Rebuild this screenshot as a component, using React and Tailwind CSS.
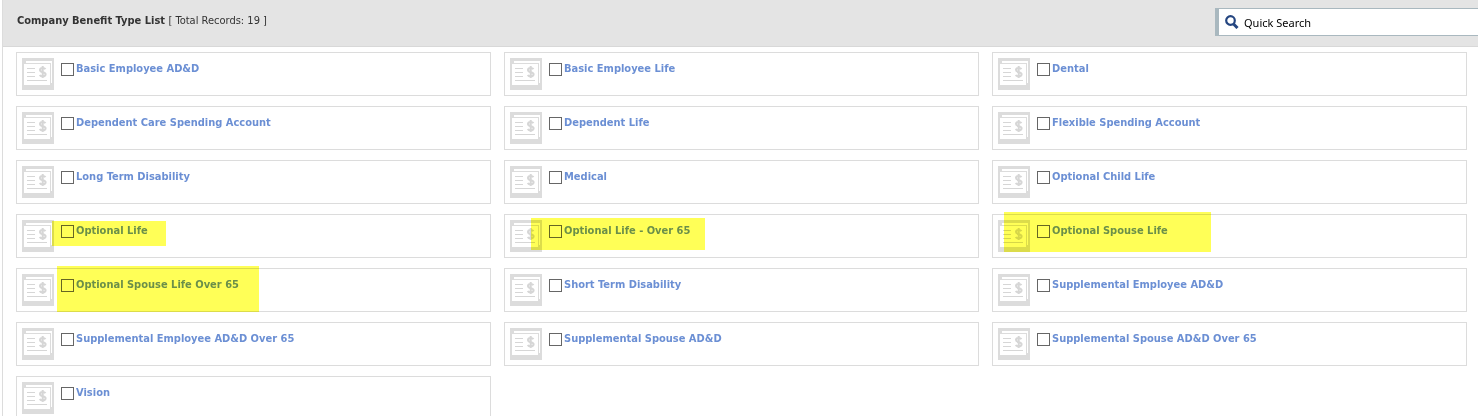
import React from 'react';

const benefits = [
  { name: 'Basic Employee AD&D' },
  { name: 'Basic Employee Life' },
  { name: 'Dental' },
  { name: 'Dependent Care Spending Account' },
  { name: 'Dependent Life' },
  { name: 'Flexible Spending Account' },
  { name: 'Long Term Disability' },
  { name: 'Medical' },
  { name: 'Optional Child Life' },
  { name: 'Optional Life', marker: 'left-[35px] top-[6px] w-[114px] h-[25px]' },
  { name: 'Optional Life - Over 65', marker: 'left-[26px] top-[3px] w-[174px] h-[32px]' },
  { name: 'Optional Spouse Life', marker: 'left-[11px] top-[-3px] w-[207px] h-[40px]' },
  { name: 'Optional Spouse Life Over 65', marker: 'left-[40px] top-[-3px] w-[202px] h-[46px]' },
  { name: 'Short Term Disability' },
  { name: 'Supplemental Employee AD&D' },
  { name: 'Supplemental Employee AD&D Over 65' },
  { name: 'Supplemental Spouse AD&D' },
  { name: 'Supplemental Spouse AD&D Over 65' },
  { name: 'Vision' },
];

function BenefitIcon() {
  return (
    <svg className="size-8 shrink-0" viewBox="0 0 32 32" aria-hidden="true">
      <rect width="32" height="32" fill="#dcdcdc" />
      <path d="M4 3h26v22h-1V4H4z" fill="#fff" />
      <path d="M4 3h26v2H4z" fill="#fff" />
      <path d="M2 6h26v21H2z" fill="#fff" />
      <path d="M5 10.5h8M5 14.5h8M5 18.5h8M5 22.5h20" stroke="#d6d6d6" />
      <path
        d="M23.500 11.200c-.6-.8-1.600-1.200-2.800-1.200-1.500 0-2.700.8-2.700 2.100 0 3 5.600 1.400 5.600 4.200 0 1.300-1.200 2.100-2.900 2.100-1.300 0-2.400-.5-3-1.400M20.700 8v12"
        fill="none"
        stroke="#d6d6d6"
        strokeWidth="2"
      />
    </svg>
  );
}

function SearchIcon() {
  return (
    <svg className="size-[14px] shrink-0" viewBox="0 0 14 14" fill="none" stroke="#244580" aria-hidden="true">
      <circle cx="5.500" cy="5.500" r="4.300" strokeWidth="2.200" />
      <path d="M8.500 9l4 4" strokeWidth="3" />
    </svg>
  );
}

function BenefitCard({ name, marker }) {
  return (
    <div className="relative flex items-start border border-[#dcdcdc] bg-white p-[5px]">
      <BenefitIcon />
      <label className="ml-[7px] flex items-start gap-[2px]">
        <input
          type="checkbox"
          className="mt-[5px] size-[13px] shrink-0 appearance-none border border-[#666] bg-white checked:bg-[#666]"
        />
        <span className="mt-1 text-[11px] leading-[14px] font-bold text-[#6b8fd4]">{name}</span>
      </label>
      {marker && (
        <div className={`pointer-events-none absolute bg-[#ffff57] mix-blend-multiply ${marker}`} />
      )}
    </div>
  );
}

export default function App() {
  return (
    <div className="h-screen overflow-hidden bg-white pl-[2px] font-['DejaVu_Sans_Condensed','DejaVu_Sans',sans-serif]">
      <div className="min-h-full border-l border-[#dcdcdc]">
        <header className="flex items-start justify-between border-b border-[#d8d8d8] bg-[#e4e4e4] pt-2 pb-[10px] pl-[14px]">
          <h1 className="mt-[6px] text-[11px] leading-[14px] font-bold text-[#333]">
            Company Benefit Type List <span className="font-normal">[ Total Records: 19 ]</span>
          </h1>
          <label className="flex h-7 w-[263px] items-center border-y border-l-4 border-[#a9b8bf] bg-white pl-[6px]">
            <SearchIcon />
            <input
              type="text"
              aria-label="Quick Search"
              placeholder="Quick Search"
              className="ml-[5px] min-w-0 flex-1 pt-[2px] font-['Noto_Sans',sans-serif] text-[11px] text-black outline-none placeholder:text-black"
            />
          </label>
        </header>
        <main className="grid grid-cols-3 gap-x-[13px] gap-y-[10px] pt-[5px] pr-[11px] pb-3 pl-[13px]">
          {benefits.map((benefit) => (
            <BenefitCard key={benefit.name} {...benefit} />
          ))}
        </main>
      </div>
    </div>
  );
}
